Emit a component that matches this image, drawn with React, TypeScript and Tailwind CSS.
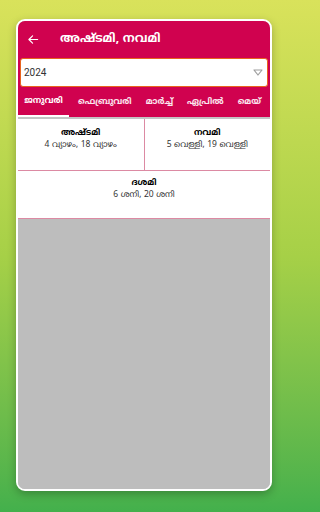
import React from "react";

const ml = { fontFamily: '"Noto Sans Malayalam", "Noto Sans", Roboto, sans-serif' };

export default function App() {
  const tabs = ["ജനുവരി", "ഫെബ്രുവരി", "മാർച്ച്", "ഏപ്രിൽ", "മെയ്"];
  return (
    <div
      className="w-full min-w-[288px] h-[512px] overflow-hidden bg-gradient-to-b from-[#d9e25b] via-[#a6d047] to-[#43b04c] px-4 pt-[19px]"
      style={ml}
    >
      <div className="w-[256px] h-[472px] rounded-[9px] border-2 border-white bg-[#bdbdbd] overflow-hidden flex flex-col shadow-[0_3px_8px_rgba(0,0,0,0.25)]">
        <div className="bg-[#d0024f]">
          <div className="h-[37px] flex items-center">
            <svg className="ml-[10px] w-[11px] h-[11px]" viewBox="0 0 24 24" fill="none" stroke="white" strokeWidth="2.6" strokeLinecap="round" strokeLinejoin="round">
              <path d="M21 12H3M10 4l-8 8 8 8" />
            </svg>
            <span className="ml-[21px] text-white font-bold text-[12px] leading-none">അഷ്ടമി, നവമി</span>
          </div>
          <div className="mx-[2px] h-[29px] bg-white border border-[#e8641e] rounded-[3px] flex items-center justify-between pl-[3px] pr-[4px]">
            <span className="text-[10px] text-[#333]" style={{ fontFamily: 'Roboto, "Noto Sans", sans-serif' }}>2024</span>
            <svg width="10" height="7" viewBox="0 0 10 7">
              <path d="M1 1h8L5 6z" fill="none" stroke="#9e9e9e" strokeWidth="1.2" strokeLinejoin="round" />
            </svg>
          </div>
          <div className="h-[30px] flex items-stretch whitespace-nowrap">
            <div className="w-[51px] flex flex-col">
              <div className="flex-1 flex items-center justify-center text-white font-bold text-[8.5px]">{tabs[0]}</div>
              <div className="h-[2px] bg-white" />
            </div>
            <div className="flex-1 flex items-center justify-around text-white/90 font-bold text-[8.5px] pl-[2px] pr-[2px]">
              <span>{tabs[1]}</span>
              <span>{tabs[2]}</span>
              <span>{tabs[3]}</span>
              <span>{tabs[4]}</span>
            </div>
          </div>
        </div>
        <div className="h-[2px] bg-[#c4c4c4]" />
        <div className="bg-white">
          <div className="flex h-[52px] border-b border-[#dc8aa3]">
            <div className="flex-1 border-r border-[#dc8aa3] flex flex-col items-center pt-[8px]">
              <span className="text-[8.5px] font-bold text-black leading-[12px]">അഷ്ടമി</span>
              <span className="text-[8.5px] text-[#333] leading-[12px]">4 വ്യാഴം, 18 വ്യാഴം</span>
            </div>
            <div className="flex-1 flex flex-col items-center pt-[8px]">
              <span className="text-[8.5px] font-bold text-black leading-[12px]">നവമി</span>
              <span className="text-[8.5px] text-[#333] leading-[12px]">5 വെള്ളി, 19 വെള്ളി</span>
            </div>
          </div>
          <div className="h-[48px] border-b border-[#dc8aa3] flex flex-col items-center pt-[6px]">
            <span className="text-[8.5px] font-bold text-black leading-[12px]">ദശമി</span>
            <span className="text-[8.5px] text-[#333] leading-[12px]">6 ശനി, 20 ശനി</span>
          </div>
        </div>
        <div className="flex-1 bg-[#bdbdbd]" />
      </div>
    </div>
  );
}
